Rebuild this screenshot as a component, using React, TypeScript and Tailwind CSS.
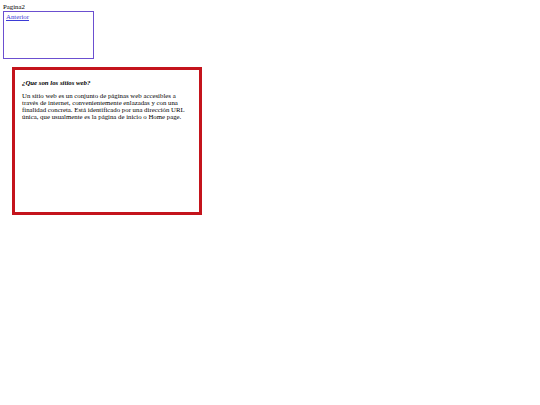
export default function App() {
  return (
    <div className="min-h-[405px] w-[540px] bg-white px-[3px] pt-[3px] font-['Liberation_Serif',serif] text-black">
      <div className="text-[6.8px] leading-[8px] text-black">Pagina2</div>
      <div className="h-[48px] w-[91px] border border-[#6b4fd0] px-[2px] pt-[1px] text-[6.8px] leading-[8px]">
        <a href="#" className="text-[#3b3bd6] underline">
          Anterior
        </a>
      </div>
      <div className="ml-[9px] mt-[8px] h-[148px] w-[190px] border-[3px] border-[#c4141c] px-[7px] pt-[9px]">
        <p className="text-[6.8px] font-bold italic leading-[7px]">¿Que son los sitios web?</p>
        <p className="mt-[6px] w-[168px] text-[6.8px] leading-[7px]">
          Un sitio web es un conjunto de páginas web accesibles a través de internet, convenientemente enlazadas y con
          una finalidad concreta. Está identificado por una dirección URL única, que usualmente es la página de inicio
          o Home page.
        </p>
      </div>
    </div>
  );
}
